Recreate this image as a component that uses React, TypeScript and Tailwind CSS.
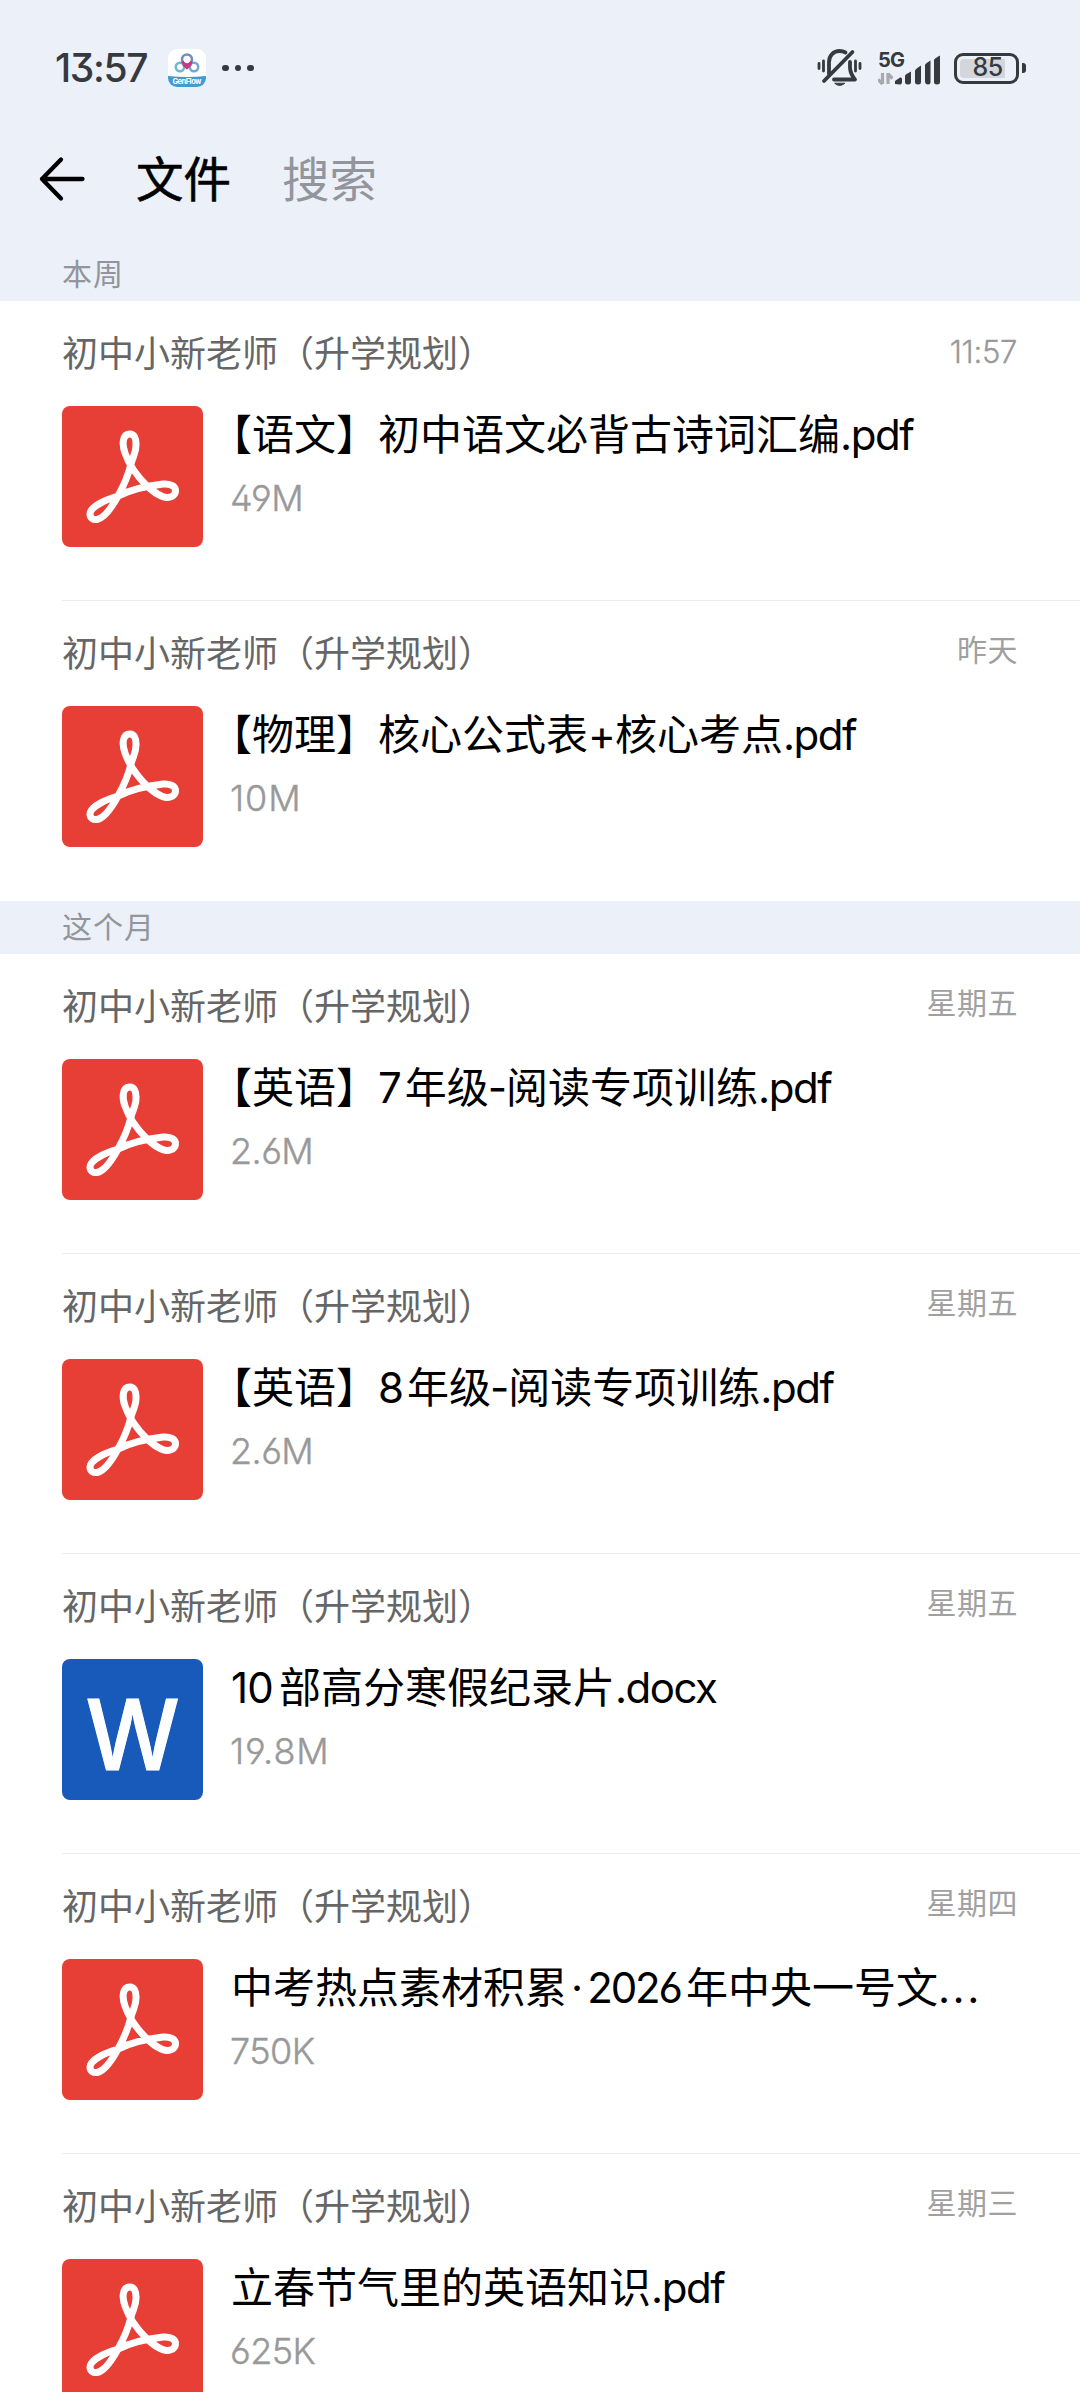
import clsx from "clsx";

type FileItem = {
  name: string;
  size: string;
  time: string;
  kind: "pdf" | "word";
};

const sender = "初中小新老师（升学规划）";

const sections: { title: string; files: FileItem[] }[] = [
  {
    title: "本周",
    files: [
      { name: "【语文】初中语文必背古诗词汇编.pdf", size: "49M", time: "11:57", kind: "pdf" },
      { name: "【物理】核心公式表+核心考点.pdf", size: "10M", time: "昨天", kind: "pdf" },
    ],
  },
  {
    title: "这个月",
    files: [
      { name: "【英语】7年级-阅读专项训练.pdf", size: "2.6M", time: "星期五", kind: "pdf" },
      { name: "【英语】8年级-阅读专项训练.pdf", size: "2.6M", time: "星期五", kind: "pdf" },
      { name: "10部高分寒假纪录片.docx", size: "19.8M", time: "星期五", kind: "word" },
      { name: "中考热点素材积累·2026年中央一号文...", size: "750K", time: "星期四", kind: "pdf" },
      { name: "立春节气里的英语知识.pdf", size: "625K", time: "星期三", kind: "pdf" },
    ],
  },
];

// spacing for the latin runs that sit between Chinese characters
function runClass(run: string) {
  if (run.startsWith("1")) return "tracking-[-0.02em] mr-[6px]";
  if (/^\d/.test(run)) return "tracking-[-0.05em] mr-[5px]";
  if (run === "...") return "tracking-[0.06em]";
  if (run === "·") return "mx-[4px]";
  if (run === "-") return "-mx-px";
  if (run === "+") return "tracking-[-0.02em]";
  return "tracking-[-0.035em]";
}

function FileName({ text }: { text: string }) {
  return (
    <span
      className={clsx(
        "text-[42px] leading-[56px] text-black",
        text.startsWith("【") && "-ml-[21px]"
      )}
    >
      {text.split(/(\d+|\.\.\.|\.[a-z]+|[·+-])/).map((part, i) =>
        i % 2 ? (
          <span key={i} className={runClass(part)}>{part}</span>
        ) : (
          part
        )
      )}
    </span>
  );
}

function AppBadge() {
  return (
    <svg width="38" height="38" viewBox="0 0 38 38">
      <defs>
        <clipPath id="badge">
          <rect width="38" height="38" rx="9" />
        </clipPath>
      </defs>
      <g clipPath="url(#badge)">
        <rect width="38" height="38" fill="#fff" />
        <path d="M0 27Q19 29 38 27V38H0Z" fill="#3f9bd0" />
        <g fill="none" strokeWidth="2.6">
          <circle cx="12" cy="18" r="4.2" stroke="#6fb6d6" />
          <circle cx="26" cy="18" r="4.2" stroke="#74a8d0" />
          <circle cx="19" cy="10.500" r="5" stroke="#6d8fc4" />
          <path d="M14.300 12.500Q19 19 23.700 12.500" stroke="#d0327e" />
          <path d="M15 15l4 4 4-4" stroke="#c43c86" />
        </g>
      </g>
      <text x="19" y="35" textAnchor="middle" textLength="29" className="fill-white font-['Inter'] text-[7.5px] font-bold">
        GenFlow
      </text>
    </svg>
  );
}

function MutedBell() {
  return (
    <svg width="46" height="40" viewBox="0 0 46 40" fill="none" stroke="#363a3f" strokeWidth="3.800" strokeLinecap="round">
      <path d="M12 26V14C12 7.500 16.500 3 22.500 3Q26 3 28.500 4.500" />
      <path d="M33 14V20Q33.500 26 38 31.500H17" strokeLinejoin="round" />
      <path d="M35.500 4L7 33" />
      <path d="M18 35.500Q22.500 39.500 27.500 35.500Z" fill="#363a3f" strokeWidth="1" />
      <path d="M6.500 13V23M2 15.500V20.500M38.500 13V23M43 15.500V20.500" strokeWidth="2.800" />
    </svg>
  );
}

function Signal() {
  return (
    <svg width="64" height="44" viewBox="0 -5 64 44" fill="#363a3f">
      <text x="0" y="16" textLength="27" className="font-['Inter'] text-[20px] font-bold">5G</text>
      <path d="M4.500 22V33M4.500 33L0 28.500M10 33V22M10 23L14.500 27.500" stroke="#a6a9ae" strokeWidth="3.200" fill="none" />
      <path d="M17 33V30L22 26.500Q24 26 24 28V31Q24 33.500 22 33.500Z" />
      <path d="M27 24.500Q27 23.500 33 20.500V31Q33 33.500 30 33.500T27 31Z" />
      <path d="M37 19.500Q37 18.500 43 14.500V31Q43 33.500 40 33.500T37 31Z" />
      <path d="M47 14Q47 12.500 52.500 9.500V31Q52.500 33.500 50 33.500T47 31Z" />
      <path d="M56 9Q56 7.500 62 4.500V31Q62 33.500 59 33.500T56 31Z" />
    </svg>
  );
}

function Battery() {
  return (
    <div className="flex items-center gap-[3px]">
      <div className="flex h-[31px] w-[65px] rounded-[9px] border-[3px] border-[#363a3f] p-[3px]">
        <div className="flex h-full w-[45px] items-center justify-center rounded-l-[4px] bg-[#d3d6db] pl-[10px] text-[25px] font-medium tracking-[-0.02em] text-[#363a3f]">
          85
        </div>
      </div>
      <div className="h-[10px] w-[4px] rounded-r-[3px] bg-[#363a3f]" />
    </div>
  );
}

function StatusBar() {
  return (
    <div className="flex h-[136px] shrink-0 items-center pl-[55px] pr-[54px] text-[#363a3f]">
      <span className="w-[93px] text-[39px] font-medium leading-[48px] tracking-[-0.035em]">13:57</span>
      <span className="ml-[20px]">
        <AppBadge />
      </span>
      <span className="ml-[16px] flex gap-[6px]">
        <i className="size-[6.5px] rounded-full bg-[#363a3f]" />
        <i className="size-[6.5px] rounded-full bg-[#363a3f]" />
        <i className="size-[6.5px] rounded-full bg-[#363a3f]" />
      </span>
      <div className="ml-auto flex items-center">
        <MutedBell />
        <span className="ml-[15px]">
          <Signal />
        </span>
        <span className="ml-[12px]">
          <Battery />
        </span>
      </div>
    </div>
  );
}

function PdfIcon() {
  return (
    <div className="size-[141px] shrink-0 rounded-[8px] bg-[#e73e36]">
      <svg viewBox="0 0 141 141" fill="none" stroke="#fff" strokeWidth="7" strokeLinejoin="round">
        <path d="M68 28C60 28 60 39 63 47C67 59 76 71 85 80C93 87 99 91.500 105 91.500C111 91.500 113.500 88 113.500 84.500C113.500 80 108 77.500 101 78C88 79.500 70 83 56 90C43 94 28 101 28 108C28 112 31 114 35 113.500C43 112 50 101 56 90C61 81 66 70 69 58C71 50 74.500 46 74 38C74 32 72 28 68 28Z" />
      </svg>
    </div>
  );
}

function WordIcon() {
  return (
    <div className="flex size-[141px] shrink-0 items-center justify-center rounded-[8px] bg-[#185aba] pt-[9px] text-[97px] font-medium leading-none text-white">
      <span className="scale-x-[0.97] [-webkit-text-stroke:1px_#fff]">W</span>
    </div>
  );
}

function FileRow({ file, last }: { file: FileItem; last: boolean }) {
  return (
    <li className="flex h-[300px] flex-col bg-white pl-[62px]">
      <div className={clsx("flex flex-1 flex-col pt-[28px]", !last && "border-b border-[#ececec]")}>
        <div className="flex items-start justify-between pr-[63px]">
          <span className="text-[36px] leading-[50px] text-[#666]">{sender}</span>
          {file.time.includes(":") ? (
            <span className="text-[31px] font-light leading-[45px] tracking-[-0.01em] text-[#999] [-webkit-text-stroke:0.3px_#999]">
              {file.time}
            </span>
          ) : (
            <span className="-mr-px text-[30px] leading-[43px] tracking-[0.5px] text-[#a0a0a0]">{file.time}</span>
          )}
        </div>
        <div className="mt-[27px] flex">
          {file.kind === "pdf" ? <PdfIcon /> : <WordIcon />}
          <div className="ml-[28px] flex flex-col whitespace-nowrap pt-px">
            <FileName text={file.name} />
            <span
              className={clsx(
                "-ml-px mt-[11px] text-[36px] font-light leading-[48px] text-[#999] [-webkit-text-stroke:0.4px_#999]",
                file.size.startsWith("1") ? "tracking-[0.025em]" : "tracking-[-0.015em]"
              )}
            >
              {file.size}
            </span>
          </div>
        </div>
      </div>
    </li>
  );
}

export default function App() {
  return (
    <div
      lang="zh-CN"
      className="flex h-[2392px] w-[1080px] flex-col overflow-hidden bg-[#ecf0f8] font-['Inter','Noto_Sans_CJK_SC',sans-serif] [font-feature-settings:'ss01']"
    >
      <StatusBar />
      <header className="flex h-[86px] shrink-0 items-center pl-[38px]">
        <svg width="48" height="46" viewBox="0 0 48 46" fill="none" stroke="#000" strokeWidth="4.300" strokeLinecap="round" strokeLinejoin="round">
          <path d="M44.500 23H4M23 3.500L4 23L23 42.500" />
        </svg>
        <h1 className="ml-[50px] pt-px text-[47.5px] leading-[64px] [-webkit-text-stroke:0.6px_#000]">文件</h1>
        <span className="ml-[51px] pt-px text-[47.5px] leading-[64px] text-[#92959b]">搜索</span>
      </header>
      {sections.map((section, i) => (
        <section key={section.title} className="shrink-0">
          <h2
            className={clsx(
              "flex items-end pl-[62px] text-[30px] leading-[54px] tracking-[1px] text-[#92959b]",
              i === 0 ? "h-[79px]" : "h-[53px]"
            )}
          >
            {section.title}
          </h2>
          <ul>
            {section.files.map((file, j) => (
              <FileRow key={file.name} file={file} last={j === section.files.length - 1} />
            ))}
          </ul>
        </section>
      ))}
    </div>
  );
}
